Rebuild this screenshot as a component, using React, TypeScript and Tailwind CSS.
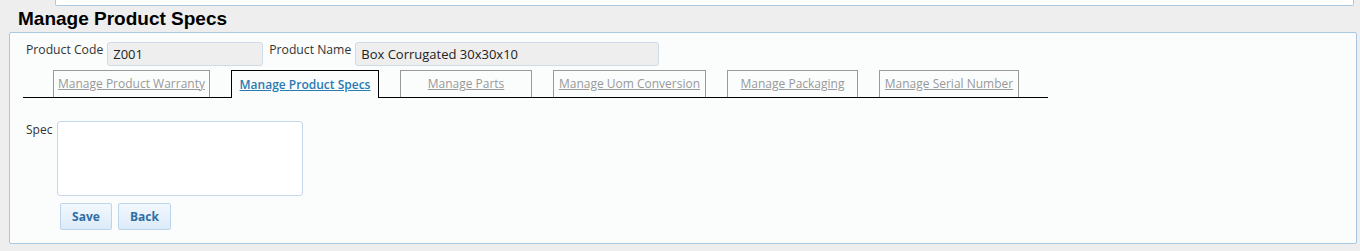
const tabs = [
  { label: 'Manage Product Warranty', w: 'w-[157px]' },
  { label: 'Manage Product Specs', w: 'w-[148px]', active: true },
  { label: 'Manage Parts', w: 'w-[132px]' },
  { label: 'Manage Uom Conversion', w: 'w-[153px]' },
  { label: 'Manage Packaging', w: 'w-[131px]' },
  { label: 'Manage Serial Number', w: 'w-[140px]' },
];

function Field({ label, value, width }: { label: string; value: string; width: string }) {
  return (
    <div className="flex items-start">
      <span className="leading-[15px] text-[12.2px] text-[#333]">{label}</span>
      <div
        className={`${width} ml-[4px] h-[24px] rounded-[3px] border border-[#cfdce8] bg-[#eeeeee] pl-[5px] text-[13px] leading-[22px] text-[#222]`}
      >
        {value}
      </div>
    </div>
  );
}

export default function App() {
  return (
    <div className="h-[251px] overflow-hidden bg-[#eeeeee] font-['Open_Sans',sans-serif]">
      <div className="ml-[55px] mr-[6px] h-[6px] rounded-b-[2px] border border-t-0 border-[#a9c8e4] bg-white" />
      <h1 className="h-[26px] pl-[18px] font-['Liberation_Sans',Arial,sans-serif] text-[19px] font-bold leading-[26px] text-black">
        Manage Product Specs
      </h1>
      <div className="ml-[9px] mr-[3px] h-[212px] rounded-[2px] border border-[#a9c8e4] bg-[#fbfdfd] pl-[16px] pt-[9px]">
        <div className="flex items-start gap-[6px]">
          <Field label="Product Code" value="Z001" width="w-[156px]" />
          <Field label="Product Name" value="Box Corrugated 30x30x10" width="w-[304px]" />
        </div>

        <div className="ml-[-3px] mt-[4px] flex h-[28px] w-[1025px] items-end gap-[21px] border-b border-black pl-[30px]">
          {tabs.map((t) =>
            t.active ? (
              <div
                key={t.label}
                className={`${t.w} mb-[-1px] flex h-[28px] items-center justify-center border border-b-0 border-black bg-[#fbfdfd] text-[12px] font-semibold text-[#2a7ab3] underline`}
              >
                {t.label}
              </div>
            ) : (
              <div
                key={t.label}
                className={`${t.w} flex h-[27px] items-center justify-center border border-b-0 border-[#999] text-[12px] text-[#999] underline`}
              >
                {t.label}
              </div>
            ),
          )}
        </div>

        <div className="mt-[23px] flex items-start">
          <span className="pt-[1px] text-[12px] leading-[16px] text-[#333]">Spec</span>
          <textarea className="ml-[5px] h-[75px] w-[246px] resize-none rounded-[3px] border border-[#c5d8ea] bg-white outline-none" />
        </div>

        <div className="ml-[34px] mt-[7px] flex gap-[6px]">
          <button className="h-[27px] w-[52px] rounded-[2px] border border-[#bcd5ec] bg-gradient-to-b from-[#f2f8fe] to-[#dcebf9] text-[12px] font-bold text-[#2e6ea5]">
            Save
          </button>
          <button className="h-[27px] w-[53px] rounded-[2px] border border-[#bcd5ec] bg-gradient-to-b from-[#f2f8fe] to-[#dcebf9] text-[12px] font-bold text-[#2e6ea5]">
            Back
          </button>
        </div>
      </div>
    </div>
  );
}
